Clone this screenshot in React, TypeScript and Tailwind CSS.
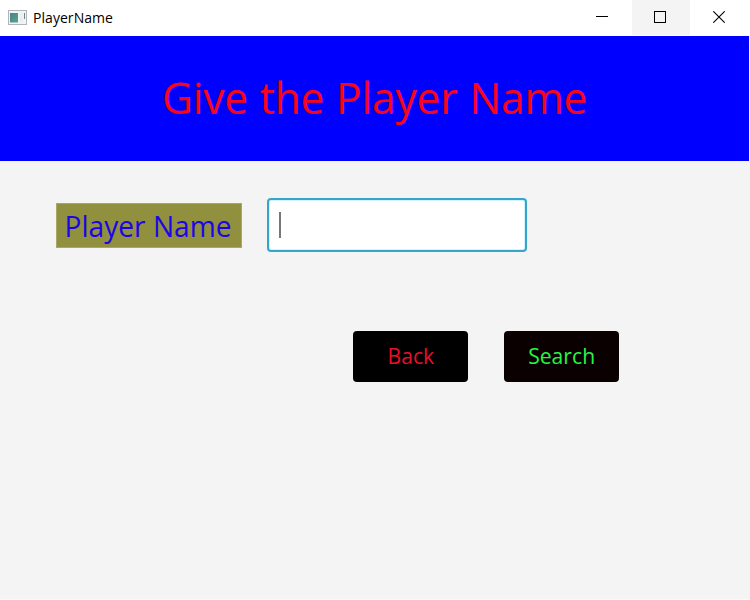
function AppIcon() {
  return (
    <svg width="20" height="16" viewBox="0 0 20 16" className="shrink-0">
      <defs>
        <linearGradient id="pane" x1="0" y1="0" x2="1" y2="1">
          <stop offset="0" stopColor="#4a7f94" />
          <stop offset="1" stopColor="#5aa584" />
        </linearGradient>
      </defs>
      <rect x="0.5" y="0.5" width="18" height="14" fill="#f1f4f5" stroke="#b0b5b9" />
      <rect x="2" y="3" width="8" height="9.5" fill="url(#pane)" />
      <rect x="12" y="3" width="3" height="9" fill="#e9eef0" />
      <rect x="16" y="3" width="1" height="6" fill="#75838c" />
    </svg>
  );
}

function TitleBar() {
  return (
    <header className="flex h-9 items-start bg-white">
      <div className="flex h-9 flex-1 items-center pl-2">
        <AppIcon />
        <span className="ml-[5px] text-[14px] leading-none tracking-[0.05px] text-black">PlayerName</span>
      </div>
      <button className="flex h-[35px] w-[59px] items-center justify-center pr-[2px]" aria-label="Minimize">
        <svg width="12" height="12" viewBox="0 0 12 12" shapeRendering="crispEdges">
          <path d="M0 4.5H12" stroke="#000" />
        </svg>
      </button>
      <button className="flex h-[35px] w-[58px] items-center justify-center bg-[#f4f4f4] pb-px pr-[2px]" aria-label="Maximize">
        <svg width="12" height="12" viewBox="0 0 12 12" shapeRendering="crispEdges">
          <rect x="0.5" y="0.5" width="11" height="11" fill="none" stroke="#000" />
        </svg>
      </button>
      <button className="flex h-[35px] w-[60px] items-center justify-center pb-px pr-[2px]" aria-label="Close">
        <svg width="12" height="12" viewBox="0 0 12 12">
          <path d="M0.3 0.3L11.7 11.7M11.7 0.3L0.3 11.7" stroke="#000" strokeWidth="1.1" />
        </svg>
      </button>
    </header>
  );
}

export default function App() {
  return (
    <div className="h-[600px] w-[750px] overflow-hidden border-b border-[#f9f9f9] bg-[#f4f4f4] font-['Open_Sans','Noto_Sans',sans-serif]">
      <TitleBar />
      <div className="mr-px flex h-[125px] items-center justify-center bg-[#0000ff] pb-[3px]">
        <h1 className="scale-x-[0.955] whitespace-nowrap text-[44.5px] leading-none [word-spacing:1px] tracking-[-0.2px] text-[#fa0518]">Give the Player Name</h1>
      </div>
      <main>
        <div className="flex items-center pl-14 pt-[37px]">
          <label className="flex h-[45px] w-[186px] items-center justify-center whitespace-nowrap border border-[#a8a868] bg-[#90903f] pr-[2px] text-[29px] leading-none text-[#1c05e6]">
            <span className="scale-x-[0.97]">Player Name</span>
          </label>
          <div className="ml-[25px] flex h-[54px] w-[260px] items-center rounded-[4px] border-2 border-[#35a5cc] bg-white pl-[10px] ring-1 ring-inset ring-[#d3f3fa]">
            <div className="h-[26px] w-[2px] bg-[#777777]" />
          </div>
        </div>
        <div className="flex gap-9 pl-[353px] pt-[79px]">
          <button className="flex h-[51px] w-[115px] items-center justify-center rounded-[4px] bg-black pb-px text-[22.5px] leading-none text-[#ea0f2c]">
            <span className="scale-x-[0.94]">Back</span>
          </button>
          <button className="flex h-[51px] w-[115px] items-center justify-center rounded-[4px] bg-[#0b0000] pb-px text-[22.5px] leading-none text-[#22f644]">
            <span className="scale-x-[0.94]">Search</span>
          </button>
        </div>
      </main>
    </div>
  );
}
